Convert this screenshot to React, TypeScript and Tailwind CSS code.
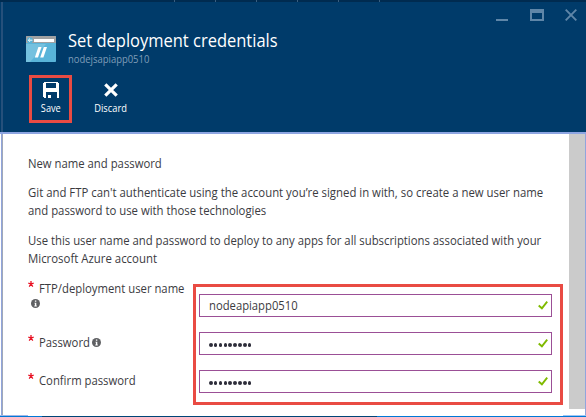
import type { ReactNode } from "react";

function Line({ children, className = "" }: { children: ReactNode; className?: string }) {
  return <div className={`h-[18px] w-max origin-left leading-[18px] whitespace-nowrap ${className}`}>{children}</div>;
}

function Label({ children }: { children: ReactNode }) {
  return <span className="mt-px origin-left scale-x-[0.942] whitespace-nowrap">{children}</span>;
}

function Info({ className = "" }: { className?: string }) {
  return (
    <svg className={`size-[9px] shrink-0 ${className}`} viewBox="0 0 9 9">
      <circle cx="4.5" cy="4.5" r="4.5" fill="#5f6063" />
      <path d="M3.9 1.5h1.4v1.3H3.9zM3.5 3.7h1.8v2.9h.5v.8H3.3v-.8h.6V4.5h-.4z" fill="#fff" />
    </svg>
  );
}

function Star() {
  return (
    <svg className="mt-[1px] size-[6px] shrink-0" viewBox="0 0 6 6">
      <path d="M3 0v3M0.3 2.2L3 3M5.7 2.2L3 3M1.2 5.6L3 3M4.8 5.6L3 3" stroke="#e81123" strokeWidth="1.3" />
    </svg>
  );
}

function Field({ value, secret = false }: { value: string; secret?: boolean }) {
  return (
    <div className="flex h-[23px] w-[353px] items-center justify-between border border-[#9b4f96] bg-white pr-[3px] pl-[9px]">
      {secret ? (
        <span className="mt-[3px] flex gap-[1.25px]" aria-label="Password">
          {Array.from({ length: 9 }, (_, i) => (
            <span key={i} className="size-[3.6px] rounded-full bg-[#2d2d3a]" />
          ))}
        </span>
      ) : (
        <span className="mt-px origin-left scale-x-[0.938] leading-[20px]">{value}</span>
      )}
      <svg className="h-[9px] w-[10px]" viewBox="0 0 10 9">
        <path d="M0.7 4.5L3.9 7.3L9.2 0.7" fill="none" stroke="#7fba00" strokeWidth="1.9" />
      </svg>
    </div>
  );
}

export default function App() {
  return (
    <div className="relative flex h-[417px] w-[586px] flex-col overflow-hidden bg-white font-['Open_Sans','Noto_Sans',sans-serif] text-[12px] text-[#3b3b3f]">
      <header className="flex h-[132px] shrink-0 flex-col bg-[#003b6a]">
        <div className="flex h-[2px] shrink-0 gap-[40px] bg-[#002b50] pl-[174px]">
          <i className="w-px bg-[#3a5f80]" />
          <i className="w-px bg-[#3a5f80]" />
          <i className="w-px bg-[#3a5f80]" />
          <i className="w-px bg-[#3a5f80]" />
          <i className="w-px bg-[#3a5f80]" />
          <i className="w-px bg-[#3a5f80]" />
        </div>
        <div className="ml-px flex h-[130px] border-l-[2px] border-[#25507b]">
          <div className="flex flex-1 flex-col pl-[23px]">
            <div className="mt-[26px] flex h-[38px]">
              <svg className="mt-[8px] h-[26px] w-[30px]" viewBox="0 0 30 26">
                <rect width="30" height="26" rx="0.8" fill="#59b4d9" />
                <path d="M0 8H20L4 26H0Z" fill="#75c1df" />
                <path d="M0 .8Q0 0 .8 0H29.2Q30 0 30 .8V7H0Z" fill="#a0a1a2" />
                <rect x="8" y="3" width="20" height="3" fill="#fff" />
                <circle cx="4" cy="4.2" r="2.9" fill="#59b4d9" />
                <path d="M6.4 4.2H2.5M4 2.5L2.3 4.2L4 5.9" fill="none" stroke="#fff" strokeWidth="0.9" />
                <path d="M12.4 11H15.5L12 21.5H8.8ZM17.8 11H21L17.4 21.5H14.2Z" fill="#fff" />
              </svg>
              <div className="ml-[12px] flex flex-col items-start whitespace-nowrap">
                <h1 className="h-[24px] origin-left scale-x-[0.942] text-[17.5px] leading-[24px] text-white">Set deployment credentials</h1>
                <div className="h-[14px] origin-left scale-x-[0.945] text-[10px] leading-[14px] text-[#7f9db8]">nodejsapiapp0510</div>
              </div>
            </div>
            <div className="mt-[9px] flex pl-[3px] text-[10px] leading-[12px] font-medium text-white">
              <div className="flex h-[48px] w-[43px] flex-col items-center border-[3px] border-[#e94b43] pt-[4px]">
                <svg className="h-[16px] w-[16px]" viewBox="0 0 16 16" shapeRendering="crispEdges">
                  <path fillRule="evenodd" d="M1 0H15V1H16V16H14V10H3V16H1V15H0V1H1ZM3 1V6H13V1Z" fill="#fff" />
                  <path d="M5 13H8V16H5Z" fill="#fff" />
                </svg>
                <span className="mt-[4px] scale-x-[0.92]">Save</span>
              </div>
              <div className="ml-[17px] flex w-[45px] flex-col items-center pt-[8px]">
                <svg className="mr-[1px] h-[14px] w-[14px]" viewBox="0 0 14 14">
                  <path d="M1.3 1.3L12.7 12.7M12.7 1.3L1.3 12.7" stroke="#fff" strokeWidth="3.2" />
                </svg>
                <span className="mt-[5px] mr-px scale-x-[0.93]">Discard</span>
              </div>
            </div>
          </div>
          <div className="flex pt-[7px] pr-[9px]">
            <svg className="h-[12px] w-[81px]" viewBox="0 0 81 12">
              <path d="M0 10H12V12H0Z" fill="#5f86a8" />
              <path fillRule="evenodd" d="M34 0H48V12H34ZM36 4V10H46V4Z" fill="#5f86a8" />
              <path d="M69.7 .7L80.3 11.3M80.3 .7L69.7 11.3" stroke="#5f86a8" strokeWidth="1.9" />
            </svg>
          </div>
        </div>
      </header>
      <div className="h-[2px] shrink-0 bg-[#8da5e2]" />
      <main className="ml-px flex h-[281px] shrink-0 border-r border-l border-r-[#91a5dc] border-l-[#91a5dc]">
        <div className="flex min-w-0 flex-1 flex-col border-l border-[#a1a9b8] pl-[25px]">
          <Line className="mt-[21px] scale-x-[0.943]">New name and password</Line>
          <Line className="mt-[11px] scale-x-[0.948]">Git and FTP can't authenticate using the account you’re signed in with, so create a new user name</Line>
          <Line className="scale-x-[0.946]">and password to use with those technologies</Line>
          <Line className="mt-[12px] scale-x-[0.944]">Use this user name and password to deploy to any apps for all subscriptions associated with your</Line>
          <Line className="scale-x-[0.950]">Microsoft Azure account</Line>
          <div className="mt-[16px] flex">
            <div className="w-[165px] shrink-0">
              <div className="mt-[-4px] flex h-[16px] items-start gap-[5px] leading-[16px]"><Star /><Label>FTP/deployment user name</Label></div>
              <Info className="mt-[3px] ml-[3px]" />
              <div className="mt-[26px] flex h-[16px] items-start gap-[5px] leading-[16px]"><Star /><Label>Password</Label><Info className="mt-[4px] ml-[-6px]" /></div>
              <div className="mt-[22px] flex h-[16px] items-start gap-[5px] leading-[16px]"><Star /><Label>Confirm password</Label></div>
            </div>
            <div className="flex h-[121px] w-[370px] shrink-0 flex-col gap-[15px] border-[3px] border-[#e94b43] pt-[7px] pl-[3px]">
              <Field value="nodeapiapp0510" />
              <Field value="" secret />
              <Field value="" secret />
            </div>
          </div>
        </div>
        <div className="h-[275px] w-[16px] shrink-0 bg-[#cbcbcb]" />
      </main>
      <div className="flex h-px shrink-0 justify-between"><i className="w-[28px] bg-[#9eb8e8]" /><i className="w-[23px] bg-[#9ec6f4]" /></div>
      <div className="flex h-px shrink-0"><i className="w-[42px] bg-[#0078d7]" /><i className="w-[335px] bg-[#004578]" /><i className="flex-1 bg-[#0078d7]" /></div>
    </div>
  );
}
